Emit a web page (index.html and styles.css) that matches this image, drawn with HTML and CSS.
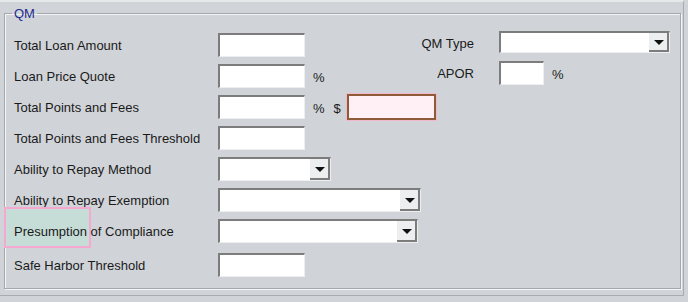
FILE: index.html
```html
<!DOCTYPE html>
<html lang="en">
<head>
    <meta charset="UTF-8">
    <title>QM</title>
    <link rel="stylesheet" href="styles.css">
</head>
<body>
    <div class="frame">
        <fieldset class="group">
            <legend>QM</legend>
            <div class="columns">
                <div class="left-grid">
                    <label class="field-label">Total Loan Amount</label>
                    <div class="cell"><span class="textbox"></span></div>

                    <label class="field-label">Loan Price Quote</label>
                    <div class="cell"><span class="textbox"></span><span class="unit">%</span></div>

                    <label class="field-label">Total Points and Fees</label>
                    <div class="cell">
                        <span class="textbox"></span><span class="unit">%</span><span class="unit dollar">$</span>
                        <span class="textbox error"></span>
                    </div>

                    <label class="field-label">Total Points and Fees Threshold</label>
                    <div class="cell"><span class="textbox"></span></div>

                    <label class="field-label">Ability to Repay Method</label>
                    <div class="cell"><span class="combo combo-sm"><span class="combo-btn"></span></span></div>

                    <label class="field-label">Ability to Repay Exemption</label>
                    <div class="cell"><span class="combo combo-lg"><span class="combo-btn"></span></span></div>

                    <label class="field-label highlight">Presumption of Compliance</label>
                    <div class="cell"><span class="combo combo-md"><span class="combo-btn"></span></span></div>

                    <label class="field-label last">Safe Harbor Threshold</label>
                    <div class="cell last"><span class="textbox"></span></div>
                </div>

                <div class="right-grid">
                    <label class="field-label right">QM Type</label>
                    <div class="cell"><span class="combo combo-type"><span class="combo-btn"></span></span></div>

                    <label class="field-label right">APOR</label>
                    <div class="cell"><span class="textbox small"></span><span class="unit">%</span></div>
                </div>
            </div>
        </fieldset>
    </div>
</body>
</html>
```

FILE: styles.css
```css
body {
    margin: 0;
    padding: 0;
    background-color: #d0d4d8;
    font-family: 'Liberation Sans', Arial, sans-serif;
    font-size: 13px;
    color: #1a1a1a;
}

.frame {
    width: 684px;
    height: 296px;
    border-top: 2px solid #e6e8ea;
    border-right: 1px solid #a8acb0;
    border-bottom: 1px solid #a8acb0;
    box-sizing: border-box;
    padding: 4px 2px 0 4px;
}

.group {
    margin: 0;
    padding: 0;
    width: 677px;
    height: 283px;
    box-sizing: border-box;
    border: 1px solid #a4a8ac;
    box-shadow: inset 1px 1px 0 #f4f5f6, 1px 1px 0 #f4f5f6;
}

legend {
    margin-left: 7px;
    padding: 0 2px;
    color: #1f2a8c;
    font-size: 13px;
}

.columns {
    display: flex;
    padding: 12px 0 0 9px;
}

.left-grid {
    display: grid;
    grid-template-columns: 204px 202px;
    grid-auto-rows: 31px;
    flex-shrink: 0;
}

.right-grid {
    display: grid;
    grid-template-columns: 54px auto;
    column-gap: 25px;
    grid-auto-rows: 30px;
    margin-top: -2px;
}

.field-label {
    display: flex;
    align-items: center;
    height: 24px;
    white-space: nowrap;
}

.field-label.right {
    justify-content: flex-end;
}

.field-label.last,
.cell.last {
    margin-top: 3px;
}

.cell {
    display: flex;
    align-items: flex-start;
    white-space: nowrap;
}

.cell > * {
    flex-shrink: 0;
}

.textbox {
    display: block;
    width: 87px;
    height: 24px;
    box-sizing: border-box;
    background-color: #ffffff;
    border-top: 2px solid #7c7c7c;
    border-left: 2px solid #7c7c7c;
    border-right: 1px solid #eceef0;
    border-bottom: 1px solid #eceef0;
}

.textbox.small {
    width: 45px;
}

.textbox.error {
    width: 89px;
    height: 26px;
    margin-top: -1px;
    margin-left: 6px;
    background-color: #fff0f6;
    border: 2px solid #8e5a38;
    box-shadow: 0 0 0 1px #f2b8cc;
}

.unit {
    margin-left: 8px;
    line-height: 28px;
}

.unit.dollar {
    margin-left: 9px;
}

.combo {
    position: relative;
    display: block;
    height: 24px;
    box-sizing: border-box;
    background-color: #ffffff;
    border-top: 2px solid #7c7c7c;
    border-left: 2px solid #7c7c7c;
    border-right: 1px solid #eceef0;
    border-bottom: 1px solid #eceef0;
}

.combo-sm { width: 113px; }
.combo-lg { width: 203px; }
.combo-md { width: 200px; }
.combo-type { width: 171px; height: 22px; }

.combo-btn {
    position: absolute;
    top: 0;
    right: 0;
    width: 20px;
    height: 100%;
    box-sizing: border-box;
    background-color: #eceeef;
    border-right: 2px solid #7c7c7c;
    border-bottom: 2px solid #7c7c7c;
}

.combo-btn::after {
    content: "";
    position: absolute;
    left: 5px;
    top: 50%;
    margin-top: -2px;
    border-left: 5px solid transparent;
    border-right: 5px solid transparent;
    border-top: 5px solid #111111;
}

.highlight {
    position: relative;
    z-index: 0;
}

.highlight::before {
    content: "";
    position: absolute;
    left: -10px;
    top: -12px;
    width: 87px;
    height: 41px;
    box-sizing: border-box;
    background-color: #c6ddd7;
    border: 2px solid #f5a8d0;
    z-index: -1;
}
```
